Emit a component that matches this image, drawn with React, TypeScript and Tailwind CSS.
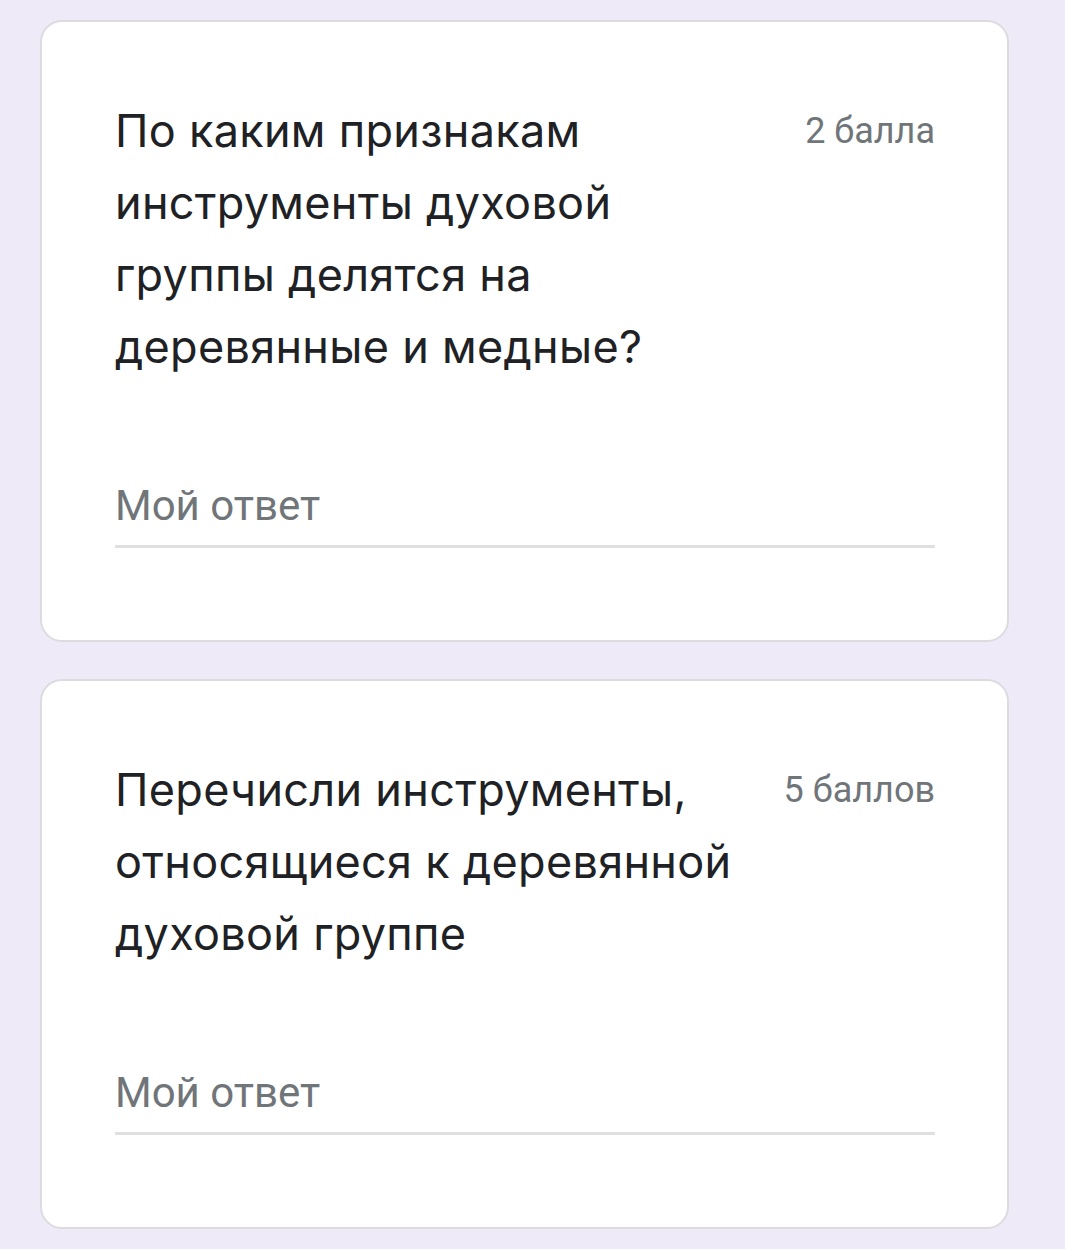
import React from 'react';

interface Question {
    id: number;
    title: string;
    points: string;
}

const questions: Question[] = [
    { id: 1, title: 'По каким признакам инструменты духовой группы делятся на деревянные и медные?', points: '2 балла' },
    { id: 2, title: 'Перечисли инструменты, относящиеся к деревянной духовой группе', points: '5 баллов' },
];

const QuestionCard: React.FC<{ q: Question }> = ({ q }) => (
    <div className="bg-white border-2 border-[#dcdce0] rounded-[22px] pl-[73px] pr-[72px] pt-[73px] pb-[92px]">
        <div className="flex items-start justify-between">
            <h2 className="w-[655px] text-[45px] leading-[72px] text-[#202124] font-['Inter',sans-serif] tracking-[0.3px]">
                {q.title}
            </h2>
            <span className="text-[36px] leading-[72px] text-[#70757a] font-['Roboto',sans-serif] whitespace-nowrap">
                {q.points}
            </span>
        </div>
        <div className="mt-[98px]">
            <div className="text-[42px] leading-[50px] text-[#70757a] font-['Roboto',sans-serif]">Мой ответ</div>
            <div className="mt-[14px] h-[3px] bg-[#e0e0e0]" />
        </div>
    </div>
);

export default function App() {
    return (
        <div className="min-h-[1249px] w-full bg-[#eeeaf8] pl-[40px] pr-[56px] pt-[20px] pb-[20px] flex flex-col gap-[37px]">
            {questions.map(q => (
                <QuestionCard key={q.id} q={q} />
            ))}
        </div>
    );
}
